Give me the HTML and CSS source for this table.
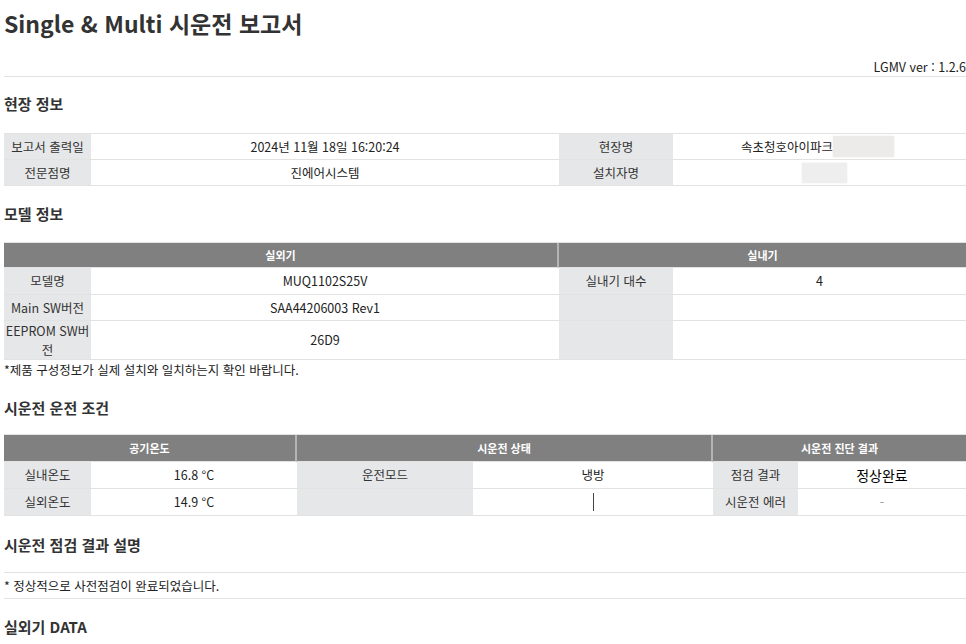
FILE: index.html
```html
<!DOCTYPE html>
<html lang="ko">
<head>
<meta charset="utf-8">
<title>Single &amp; Multi 시운전 보고서</title>
<link rel="stylesheet" href="styles.css">
</head>
<body>
<div class="page">
  <h1 class="title">Single &amp; Multi 시운전 보고서</h1>
  <div class="ver">LGMV ver : 1.2.6</div>

  <h2 class="sec sec-site">현장 정보</h2>
  <div class="grid grid-site">
    <div class="cell label">보고서 출력일</div>
    <div class="cell">2024년 11월 18일 16:20:24</div>
    <div class="cell label">현장명</div>
    <div class="cell">속초청호아이파크<span class="redact redact-name"></span></div>
    <div class="cell label">전문점명</div>
    <div class="cell">진에어시스템</div>
    <div class="cell label">설치자명</div>
    <div class="cell"><span class="redact redact-installer"></span></div>
  </div>

  <h2 class="sec sec-model">모델 정보</h2>
  <div class="grid grid-model">
    <div class="cell head span2 head-first">실외기</div>
    <div class="cell head span2">실내기</div>
    <div class="cell label">모델명</div>
    <div class="cell">MUQ1102S25V</div>
    <div class="cell label">실내기 대수</div>
    <div class="cell">4</div>
    <div class="cell label">Main SW버전</div>
    <div class="cell">SAA44206003 Rev1</div>
    <div class="cell label"></div>
    <div class="cell"></div>
    <div class="cell label wrap">EEPROM SW버전</div>
    <div class="cell">26D9</div>
    <div class="cell label"></div>
    <div class="cell"></div>
  </div>
  <p class="note">*제품 구성정보가 실제 설치와 일치하는지 확인 바랍니다.</p>

  <h2 class="sec sec-cond">시운전 운전 조건</h2>
  <div class="grid grid-cond">
    <div class="cell head span2 head-first">공기온도</div>
    <div class="cell head span2 head-first">시운전 상태</div>
    <div class="cell head span2">시운전 진단 결과</div>
    <div class="cell label">실내온도</div>
    <div class="cell">16.8 °C</div>
    <div class="cell label">운전모드</div>
    <div class="cell">냉방</div>
    <div class="cell label">점검 결과</div>
    <div class="cell strong">정상완료</div>
    <div class="cell label">실외온도</div>
    <div class="cell">14.9 °C</div>
    <div class="cell label"></div>
    <div class="cell"><span class="caret"></span></div>
    <div class="cell label">시운전 에러</div>
    <div class="cell muted">-</div>
  </div>

  <h2 class="sec sec-result">시운전 점검 결과 설명</h2>
  <div class="result">* 정상적으로 사전점검이 완료되었습니다.</div>

  <h2 class="sec sec-data">실외기 DATA</h2>
</div>
</body>
</html>
```

FILE: styles.css
```css
* {
  box-sizing: border-box;
}

body {
  margin: 0;
  background: #ffffff;
  font-family: "Noto Sans CJK KR", "Noto Sans", sans-serif;
  color: #333333;
}

.page {
  width: 966px;
  padding-left: 4px;
}

.title {
  margin: 0;
  padding-top: 7px;
  font-size: 23px;
  line-height: 32px;
  font-weight: 700;
  color: #333333;
}

.ver {
  margin-top: 19px;
  height: 19px;
  line-height: 18px;
  font-size: 12.5px;
  text-align: right;
  color: #222222;
  border-bottom: 1px solid #e2e2e2;
}

.sec {
  margin: 0;
  font-size: 15px;
  line-height: 20px;
  font-weight: 700;
  color: #333333;
}

.sec-site { margin-top: 17px; }
.sec-model { margin-top: 18px; }
.sec-cond { margin-top: 18px; }
.sec-result { margin-top: 19px; }
.sec-data { margin-top: 18px; }

.grid {
  display: grid;
  width: 962px;
  border-top: 1px solid #e2e2e2;
}

.grid-site {
  margin-top: 19px;
  grid-template-columns: 87px 468px 114px 293px;
  grid-auto-rows: 26px;
}

.grid-model {
  margin-top: 18px;
  grid-template-columns: 87px 468px 114px 293px;
  grid-template-rows: 25px 27px 26px 39px;
}

.grid-cond {
  margin-top: 16px;
  grid-template-columns: 87px 206px 176px 240px 85px 168px;
  grid-template-rows: 27px 27px 27px;
}

.cell {
  display: flex;
  align-items: center;
  justify-content: center;
  padding: 0 4px;
  font-size: 12.5px;
  line-height: 18px;
  text-align: center;
  color: #222222;
  border-bottom: 1px solid #e2e2e2;
}

.label {
  background: #e6e7e8;
  color: #333333;
}

.wrap {
  padding: 0;
  line-height: 19px;
  word-break: break-all;
}

.head {
  background: #808081;
  color: #ffffff;
  font-size: 11px;
  font-weight: 700;
}

.head-first {
  border-right: 2px solid #b4b4b6;
}

.span2 {
  grid-column: span 2;
}

.strong {
  font-size: 14px;
  font-weight: 400;
  color: #000000;
}

.muted {
  color: #999999;
}

.caret {
  display: inline-block;
  width: 1px;
  height: 18px;
  background: #444444;
}

.redact {
  display: inline-block;
  vertical-align: middle;
  background: #ecebea;
  box-shadow: 0 0 2px #ecebea;
}

.redact-name {
  width: 61px;
  height: 21px;
  margin-right: 4px;
}

.redact-installer {
  width: 45px;
  height: 20px;
  margin-left: 10px;
  background: #eeeeee;
}

.note {
  margin: 0;
  font-size: 12.5px;
  line-height: 20px;
  color: #222222;
}

.result {
  margin-top: 17px;
  width: 962px;
  height: 27px;
  font-size: 12.5px;
  line-height: 25px;
  color: #222222;
  border-top: 1px solid #e2e2e2;
  border-bottom: 1px solid #e2e2e2;
}
```
